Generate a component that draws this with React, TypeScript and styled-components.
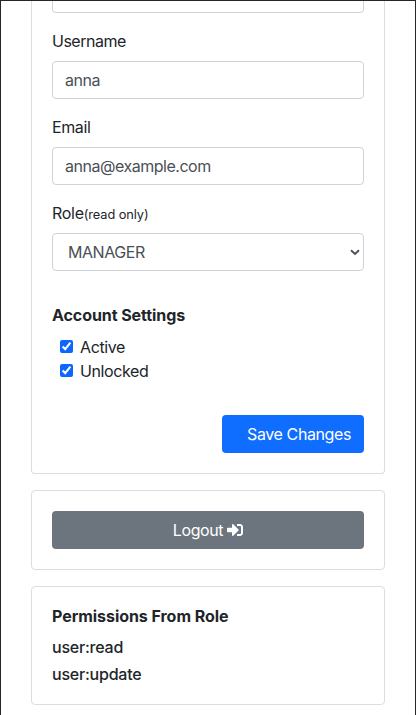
import React from 'react';
import styled, { createGlobalStyle } from 'styled-components';

const GlobalStyle = createGlobalStyle`
  *, *::before, *::after { box-sizing: border-box; }
  html, body { margin: 0; padding: 0; background: #fff; overflow: hidden; }
  body, input, select, button {
    font-family: Inter, "Liberation Sans", sans-serif;
    font-size: 16px;
    line-height: 24px;
    letter-spacing: -0.4px;
    color: #212529;
  }
`;

const Screen = styled.main`
  display: flex;
  flex-direction: column;
  gap: 16px;
  height: 715px;
  padding: 0 30px;
  border: 1px solid #262628;
  border-bottom: 0;
  overflow: hidden;
`;

const Card = styled.section<{ $clipped?: boolean }>`
  flex: none;
  padding: ${p => (p.$clipped ? '0 20px 20px' : '20px')};
  border: 1px solid #dcdddf;
  border-top-width: ${p => (p.$clipped ? 0 : '1px')};
  border-radius: ${p => (p.$clipped ? '0 0 4px 4px' : '4px')};
`;

const PreviousField = styled.div`
  height: 12px;
  margin-bottom: 16px;
  border: 1px solid #ced4da;
  border-top: 0;
  border-radius: 0 0 4px 4px;
`;

const Field = styled.div`
  display: flex;
  flex-direction: column;
  gap: 8px;
  margin-bottom: 16px;
`;

const Label = styled.label<{ $track?: number }>`
  display: block;
  height: 24px;
  letter-spacing: ${p => p.$track ?? -0.4}px;
`;

const Hint = styled.small`
  font-size: 12.8px;
  letter-spacing: -0.08px;
`;

const Input = styled.input<{ $track?: number }>`
  display: block;
  width: 100%;
  height: 38px;
  padding: 6px 12px;
  color: #495057;
  background: #fff;
  border: 1px solid #ced4da;
  border-radius: 4px;
  outline: none;
  letter-spacing: ${p => p.$track ?? -0.4}px;
`;

const SelectBox = styled.div`
  display: flex;
  align-items: center;
  height: 38px;
  padding-right: 3px;
  border: 1px solid #ced4da;
  border-radius: 4px;
`;

const Select = styled.select`
  flex: 1;
  height: 36px;
  padding: 0 0 0 15px;
  border: 0;
  outline: none;
  appearance: none;
  background: transparent;
  color: #495057;
  letter-spacing: -0.45px;
`;

const Heading = styled.h2<{ $top?: number; $gap: number; $track: number }>`
  margin: ${p => p.$top ?? 0}px 0 ${p => p.$gap}px;
  font-size: 16px;
  line-height: 19px;
  font-weight: 700;
  letter-spacing: ${p => p.$track}px;
`;

const CheckRow = styled.label`
  display: flex;
  align-items: center;
  gap: 7px;
  height: 24px;
  padding-left: 8px;
`;

const Checkbox = styled.input`
  width: 13px;
  height: 13px;
  margin: 0 0 2px;
  accent-color: #0d66ff;
`;

const Actions = styled.div`
  display: flex;
  justify-content: flex-end;
  margin-top: 32px;
`;

const Button = styled.button<{ $variant: 'primary' | 'secondary' }>`
  display: flex;
  align-items: center;
  justify-content: ${p => (p.$variant === 'primary' ? 'flex-end' : 'center')};
  gap: 4px;
  width: ${p => (p.$variant === 'primary' ? '142px' : '100%')};
  height: 38px;
  padding: 0 13px;
  border: 0;
  border-radius: 4px;
  color: #fff;
  white-space: nowrap;
  background: ${p => (p.$variant === 'primary' ? '#0f6dff' : '#6c757d')};
`;

const Permissions = styled.ul`
  display: flex;
  flex-direction: column;
  gap: 7px;
  list-style: none;
  margin: 0;
  padding: 0;
`;

const Permission = styled.li`
  line-height: 20px;
  font-weight: 500;
  letter-spacing: -0.22px;
`;

const ChevronIcon = () => (
  <svg width="10" height="7" viewBox="0 0 10 7" fill="none">
    <path d="M1 1.2L5 5L9 1.2" stroke="#495057" strokeWidth="1.9" />
  </svg>
);

const SignInIcon = () => (
  <svg width="16" height="16" viewBox="0 0 512 512" fill="#fff">
    <path d="M416 448h-84c-6.600 0-12-5.400-12-12v-40c0-6.600 5.400-12 12-12h84c17.700 0 32-14.300 32-32V160c0-17.700-14.300-32-32-32h-84c-6.600 0-12-5.400-12-12V76c0-6.600 5.400-12 12-12h84c53 0 96 43 96 96v192c0 53-43 96-96 96zm-47-209L201 71c-15-15-41-4.500-41 17v96H24c-13.300 0-24 10.700-24 24v96c0 13.300 10.700 24 24 24h136v96c0 21.500 26 32 41 17l168-168c9.300-9.400 9.300-24.600 0-34z" />
  </svg>
);

export default function App() {
  return (
    <>
      <GlobalStyle />
      <Screen>
        <Card $clipped>
          <PreviousField />
          <Field>
            <Label htmlFor="username" $track={-0.5}>Username</Label>
            <Input id="username" defaultValue="anna" $track={-0.5} />
          </Field>
          <Field>
            <Label htmlFor="email">Email</Label>
            <Input id="email" defaultValue="anna@example.com" $track={-0.48} />
          </Field>
          <Field>
            <Label htmlFor="role" $track={-0.3}>Role<Hint>(read only)</Hint></Label>
            <SelectBox>
              <Select id="role" defaultValue="MANAGER">
                <option>MANAGER</option>
              </Select>
              <ChevronIcon />
            </SelectBox>
          </Field>
          <Heading $top={35} $gap={10} $track={-0.08}>Account Settings</Heading>
          <CheckRow><Checkbox type="checkbox" defaultChecked />Active</CheckRow>
          <CheckRow><Checkbox type="checkbox" defaultChecked />Unlocked</CheckRow>
          <Actions>
            <Button $variant="primary">Save Changes</Button>
          </Actions>
        </Card>
        <Card>
          <Button $variant="secondary">Logout<SignInIcon /></Button>
        </Card>
        <Card>
          <Heading $gap={11} $track={-0.05}>Permissions From Role</Heading>
          <Permissions>
            <Permission>user:read</Permission>
            <Permission>user:update</Permission>
          </Permissions>
        </Card>
      </Screen>
    </>
  );
}
